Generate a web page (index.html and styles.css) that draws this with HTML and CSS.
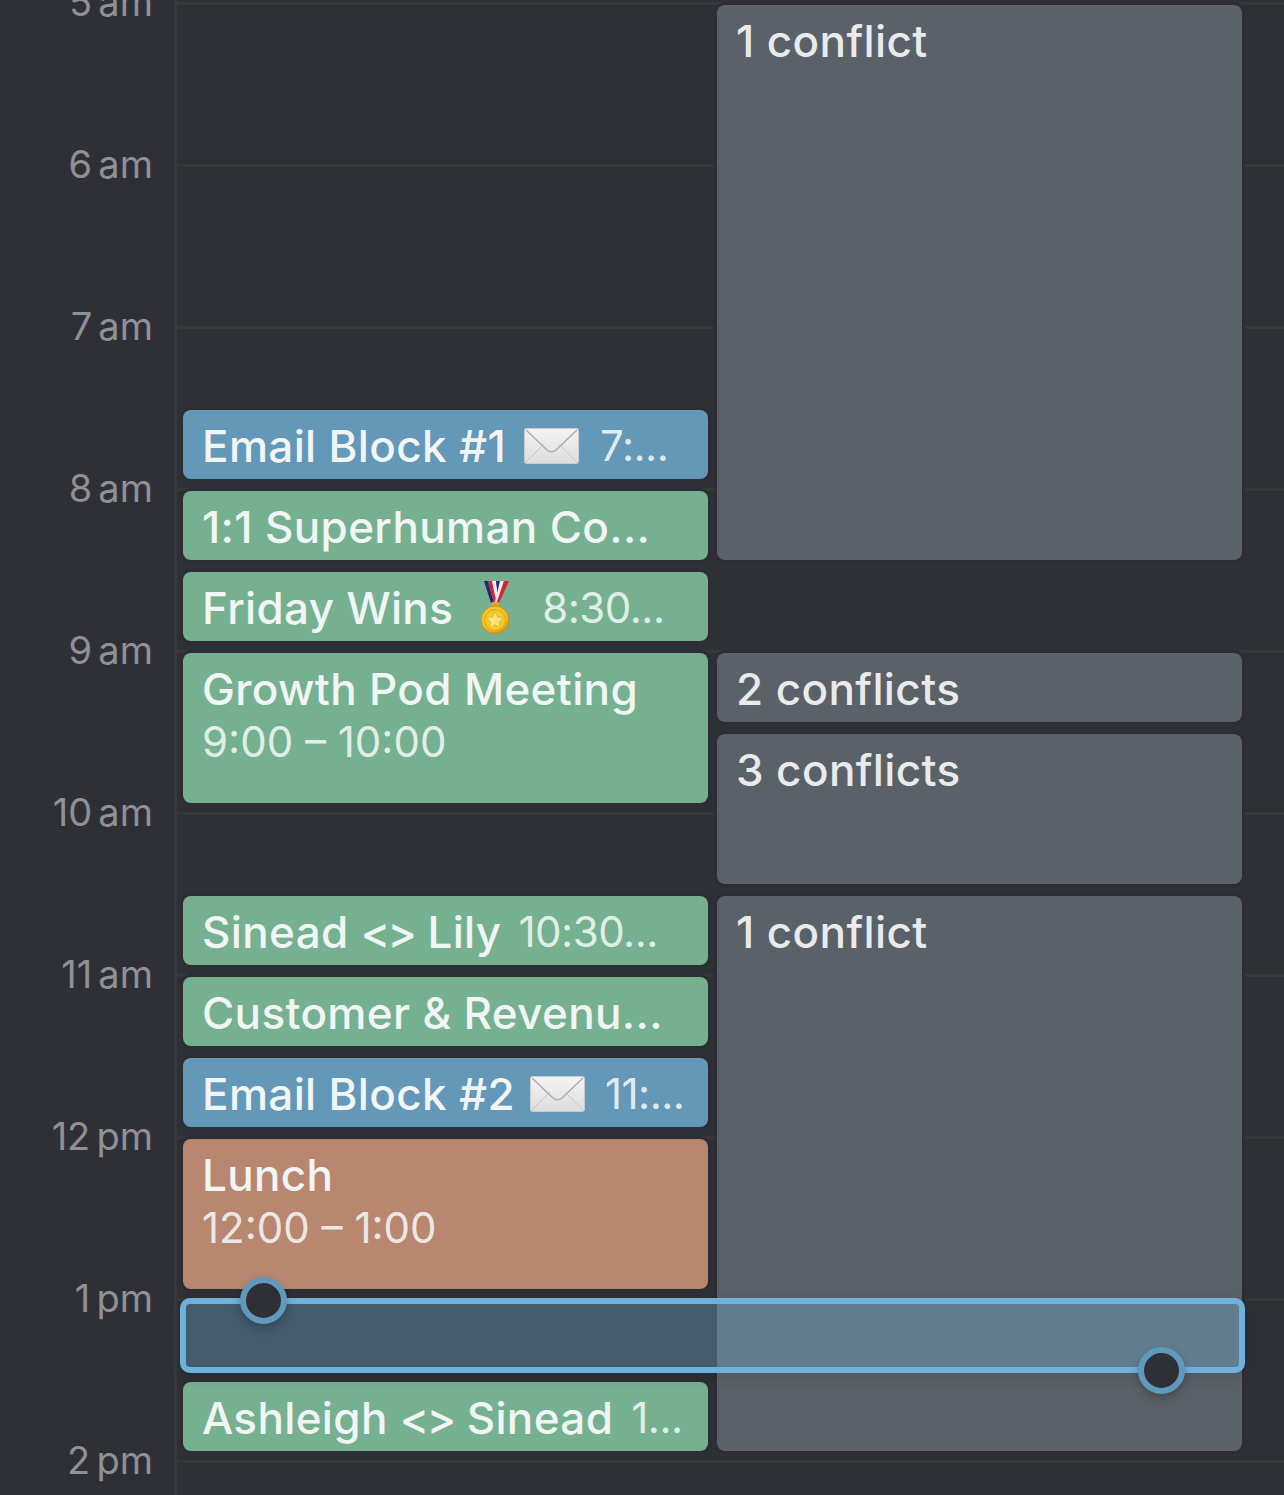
FILE: index.html
```html
<!DOCTYPE html>
<html lang="en">
<head>
    <meta charset="UTF-8">
    <title>Calendar</title>
    <link rel="stylesheet" href="styles.css">
</head>
<body>
    <div class="calendar">
        <div class="times">
            <div class="hour">5 am</div>
            <div class="hour">6 am</div>
            <div class="hour">7 am</div>
            <div class="hour">8 am</div>
            <div class="hour">9 am</div>
            <div class="hour">10 am</div>
            <div class="hour">11 am</div>
            <div class="hour">12 pm</div>
            <div class="hour">1 pm</div>
            <div class="hour">2 pm</div>
        </div>

        <div class="grid">
            <!-- conflicts column -->
            <div class="event conflict r1 s7">1 conflict</div>
            <div class="event conflict r9">2 conflicts</div>
            <div class="event conflict r10 s2">3 conflicts</div>
            <div class="event conflict r12 s7">1 conflict</div>

            <!-- my events -->
            <div class="event blue r6 row">
                <span class="title">Email Block #1</span>
                <svg class="envelope" viewBox="0 0 55 36">
                    <defs>
                        <linearGradient id="env1" x1="0" y1="0" x2="0" y2="1">
                            <stop offset="0" stop-color="#f4f4f4"/>
                            <stop offset="1" stop-color="#dcdcdc"/>
                        </linearGradient>
                    </defs>
                    <rect x="0.5" y="0.5" width="54" height="35" rx="2" fill="url(#env1)" stroke="#c9cdd0"/>
                    <path d="M1 35 L20 16 M54 35 L35 16" stroke="#c4c7c9" stroke-width="1" fill="none"/>
                    <path d="M2 2 L23 22 Q27.5 25.5 32 22 L53 2" stroke="#a9adb0" stroke-width="1.4" fill="none"/>
                </svg>
                <span class="time">7:...</span>
            </div>
            <div class="event green r7"><span class="title">1:1 Superhuman Co...</span></div>
            <div class="event green r8 row">
                <span class="title">Friday Wins</span>
                <svg class="medal" viewBox="0 0 29 55">
                    <defs>
                        <radialGradient id="gold" cx="0.45" cy="0.4" r="0.6">
                            <stop offset="0" stop-color="#fbe04a"/>
                            <stop offset="0.75" stop-color="#f2c21f"/>
                            <stop offset="1" stop-color="#c98f1c"/>
                        </radialGradient>
                    </defs>
                    <path d="M3 1 H7 L13 23 H10 Z" fill="#1f2a78"/>
                    <path d="M7 1 H11 L15 18 L13 23 Z" fill="#d9232e"/>
                    <path d="M11 1 H15 L17 16 L15 20 Z" fill="#eeeef2"/>
                    <path d="M15 1 H19 L16.5 13 Z" fill="#1f2a78"/>
                    <path d="M19 1 H23 L17.5 23 H14 Z" fill="#eeeef2"/>
                    <path d="M23 1 H28 L18 23 H15.5 Z" fill="#d9232e"/>
                    <rect x="10.5" y="22" width="7.5" height="5" rx="1" fill="#d9a924"/>
                    <circle cx="14" cy="40" r="14" fill="url(#gold)" stroke="#c4922a" stroke-width="1"/>
                    <circle cx="14" cy="40" r="10.5" fill="#f3c92c" stroke="#d9a71f" stroke-width="1"/>
                    <path d="M14 31.5 L16.5 37.1 L22.5 37.7 L18 41.7 L19.3 47.7 L14 44.6 L8.7 47.7 L10 41.7 L5.5 37.7 L11.5 37.1 Z" fill="#fbe679" stroke="#dcae2a" stroke-width="0.6"/>
                </svg>
                <span class="time">8:30...</span>
            </div>
            <div class="event green r9 s2">
                <div class="title">Growth Pod Meeting</div>
                <div class="time">9:00 – 10:00</div>
            </div>
            <div class="event green r12 row">
                <span class="title">Sinead <span class="arrows">&lt;&gt;</span> Lily</span>
                <span class="time">10:30...</span>
            </div>
            <div class="event green r13"><span class="title">Customer &amp; Revenu...</span></div>
            <div class="event blue r14 row">
                <span class="title">Email Block #2</span>
                <svg class="envelope" viewBox="0 0 55 36">
                    <rect x="0.5" y="0.5" width="54" height="35" rx="2" fill="url(#env1)" stroke="#c9cdd0"/>
                    <path d="M1 35 L20 16 M54 35 L35 16" stroke="#c4c7c9" stroke-width="1" fill="none"/>
                    <path d="M2 2 L23 22 Q27.5 25.5 32 22 L53 2" stroke="#a9adb0" stroke-width="1.4" fill="none"/>
                </svg>
                <span class="time">11:...</span>
            </div>
            <div class="event brown r15 s2">
                <div class="title">Lunch</div>
                <div class="time">12:00 – 1:00</div>
            </div>
            <div class="event green r18 row">
                <span class="title">Ashleigh <span class="arrows">&lt;&gt;</span> Sinead</span>
                <span class="time">1...</span>
            </div>

            <!-- drag selection -->
            <div class="selection">
                <div class="handle handle-top"></div>
                <div class="handle handle-bottom"></div>
            </div>
        </div>
    </div>
</body>
</html>
```

FILE: styles.css
```css
html, body { margin: 0; height: 100%; }
body { background: #2f3036; font-family: Inter, "Liberation Sans", sans-serif; overflow: hidden; height: 1495px; }
.calendar { display: flex; height: 1495px; overflow: hidden; }

.times { width: 174px; flex: none; border-right: 3px solid #37383b; box-sizing: content-box; }
.hour { height: 162px; line-height: 162px; margin-right: 21px; text-align: right; color: #8f9196; font-size: 38px; word-spacing: -4.5px; }
.hour:first-child { margin-top: -79px; }

.grid {
    flex: 1;
    display: grid;
    grid-template-columns: 6px 525px 9px 525px 1fr;
    grid-auto-rows: 81px;
    padding-top: 3px;
    background: repeating-linear-gradient(#37383b 0, #37383b 3px, transparent 3px, transparent 162px) 0 2px;
}

.event { grid-column: 2; margin: 2px 0 10px; padding: 10px 19px 0; border-radius: 8px; box-shadow: 0 0 0 3px #2d2e34; font-size: 44px; line-height: 52px; color: #f1f6f4; white-space: nowrap; overflow: hidden; box-sizing: border-box; }
.row { display: flex; align-items: center; padding-top: 2px; padding-bottom: 0; }
.title { font-weight: 500; letter-spacing: 0.35px; }
.arrows { letter-spacing: -2.5px; margin-right: 1px; }
.time { font-weight: 400; font-size: 42px; color: rgba(241, 246, 244, 0.9); }
.row .time { margin-left: 18px; letter-spacing: -0.5px; }
.r12 .time { margin-left: 17px; }
.event > div.time { margin-top: 1px; }

.blue { background: #6498b9; }
.green { background: #75b191; }
.brown { background: #b98770; }
.conflict { grid-column: 4; background: #5b6168; color: #e8eaec; font-weight: 500; letter-spacing: 0.4px; }

.r1 { grid-row-start: 1; }
.r6 { grid-row-start: 6; }
.r7 { grid-row-start: 7; }
.r8 { grid-row-start: 8; }
.r9 { grid-row-start: 9; }
.r10 { grid-row-start: 10; }
.r12 { grid-row-start: 12; }
.r13 { grid-row-start: 13; }
.r14 { grid-row-start: 14; }
.r15 { grid-row-start: 15; }
.r18 { grid-row-start: 18; }
.s2 { grid-row-end: span 2; }
.s7 { grid-row-end: span 7; }

.envelope { width: 55px; height: 36px; margin-left: 15px; margin-right: 2px; flex: none; }
.r6 .envelope { margin-left: 18px; margin-right: 3px; }
.medal { width: 29px; height: 55px; margin-left: 28px; margin-right: 14px; flex: none; }

.selection {
    grid-column: 2 / 5;
    grid-row-start: 17;
    position: relative;
    margin: -1px -3px 7px;
    border: 6px solid #6cb2dc;
    border-radius: 10px;
    background: rgba(108, 178, 220, 0.34);
    box-shadow: 0 4px 14px rgba(0, 0, 0, 0.12);
}
.handle { position: absolute; width: 47px; height: 47px; box-sizing: border-box; border-radius: 50%; background: #2f3036; border: 6px solid #5f9abc; box-shadow: 0 4px 10px rgba(0, 0, 0, 0.25); }
.handle-top { left: 54px; top: -27px; }
.handle-bottom { right: 54px; bottom: -27px; }
```
